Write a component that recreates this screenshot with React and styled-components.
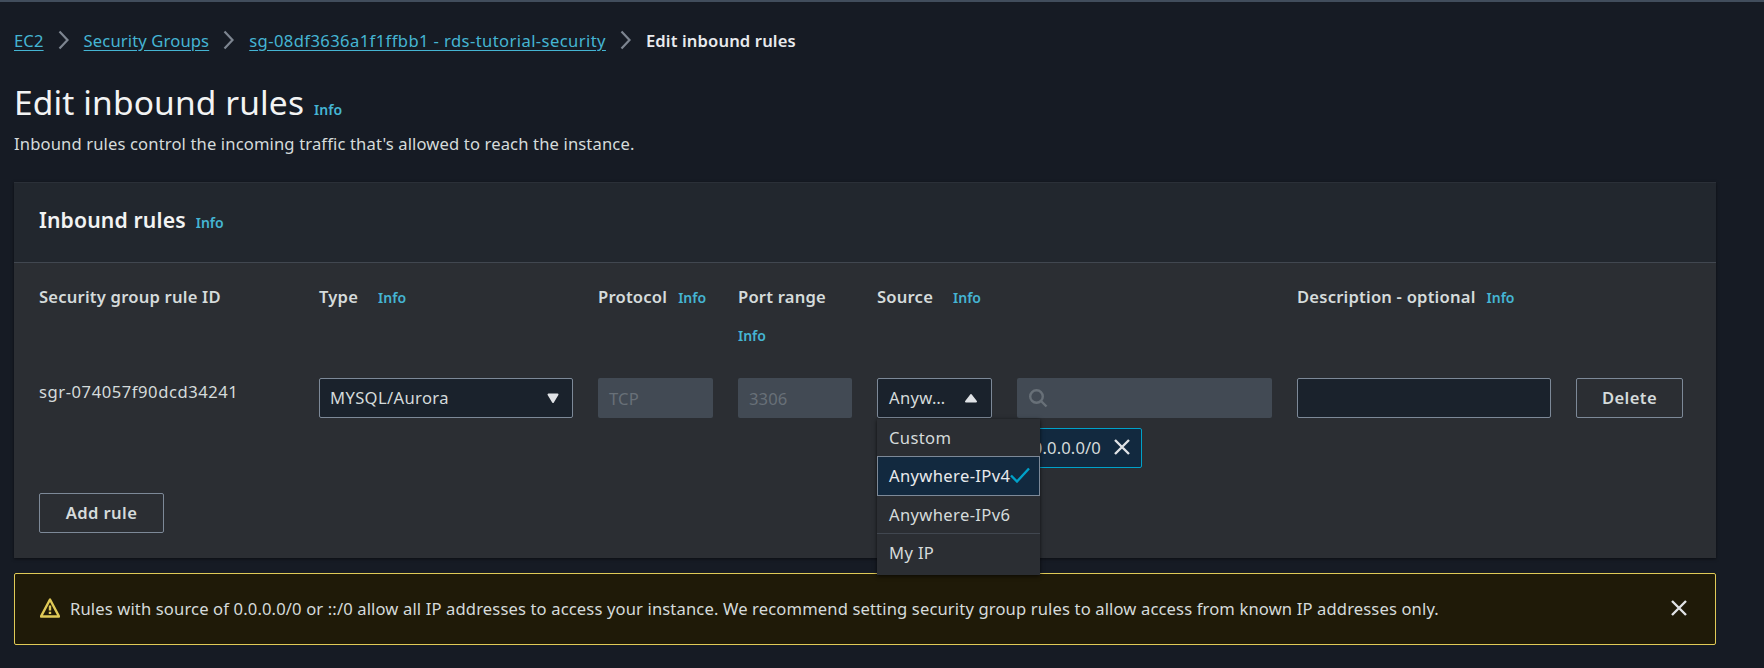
import React from 'react';
import styled, { createGlobalStyle } from 'styled-components';

const GlobalStyle = createGlobalStyle`
    html, body {
        margin: 0;
        padding: 0;
        height: 100%;
        background: #161b24;
    }

    body {
        font-family: "Noto Sans", "Open Sans", sans-serif;
        font-size: 16.6px;
        letter-spacing: .13px;
        color: #d5dbdb;
    }
`;

const Page = styled.div`
    height: 668px;
    box-sizing: border-box;
    border-top: 2px solid #414d5c;
    padding: 0 48px 0 14px;
    overflow: hidden;
`;

const Breadcrumbs = styled.nav`
    display: flex;
    align-items: center;
    height: 24px;
    margin-top: 26px;
    gap: 13px;
`;

const Crumb = styled.a`
    color: #45b5d3;
    text-decoration: underline;
    text-underline-offset: 3px;
    letter-spacing: ${props => props.wide ? '.4px' : 'inherit'};
`;

const CurrentCrumb = styled.span`
    color: #e8eaed;
    font-weight: 600;
`;

const TitleRow = styled.div`
    display: flex;
    align-items: baseline;
    gap: 10px;
    margin-top: 28px;
`;

const Title = styled.h1`
    margin: 0;
    font-size: 33.5px;
    line-height: 44px;
    font-weight: 400;
    color: #f2f3f3;
`;

const InfoLink = styled.a`
    color: #45b5d3;
    font-size: 14px;
    font-weight: 600;
    letter-spacing: 0;
`;

const Subtitle = styled.p`
    margin: 8px 0 0;
    line-height: 24px;
    color: #d5dbdb;
`;

const Panel = styled.section`
    margin-top: 26px;
    background: #2b2e33;
    box-shadow: 0 1px 3px rgba(0, 0, 0, .5);
`;

const PanelHeader = styled.header`
    display: flex;
    align-items: baseline;
    gap: 10px;
    height: 81px;
    box-sizing: border-box;
    padding: 23px 25px 0;
    background: #22272e;
    border-top: 1px solid #2b3038;
    border-bottom: 1px solid #414750;
`;

const PanelTitle = styled.h2`
    margin: 0;
    font-size: 21.2px;
    line-height: 28px;
    font-weight: 600;
    color: #f2f3f3;
`;

const PanelBody = styled.div`
    padding: 22px 25px 25px;
`;

const RuleGrid = styled.div`
    display: grid;
    grid-template-columns: 255px 254px 115px 114px 115px 255px 254px 107px;
    column-gap: 25px;
`;

const HeaderCell = styled.div`
    grid-column: ${props => props.span ? `span ${props.span}` : 'auto'};
    height: 93px;
    line-height: 24px;
`;

const HeaderLabel = styled.span`
    font-weight: 600;
    letter-spacing: .2px;
    color: #d5dbdb;
    margin-right: ${props => props.gap || 11}px;
`;

const WrappedInfo = styled(InfoLink)`
    display: block;
    margin-top: 15px;
`;

const RuleId = styled.div`
    line-height: 24px;
    padding-top: 2px;
    letter-spacing: .55px;
`;

const controlBase = `
    height: 40px;
    box-sizing: border-box;
    border-radius: 2px;
    display: flex;
    align-items: center;
`;

const Select = styled.div`
    ${controlBase}
    justify-content: space-between;
    background: #1a222c;
    border: 1px solid #7d8998;
    padding: 0 ${props => props.open ? '12px' : '11px'} 0 ${props => props.open ? '11px' : '10px'};
    letter-spacing: .35px;
    line-height: 36px;
    color: #d5dbdb;
`;

const DisabledInput = styled.div`
    ${controlBase}
    background: #424a54;
    padding: 0 11px;
    color: #687078;
`;

const TextInput = styled.div`
    ${controlBase}
    background: #1a222c;
    border: 1px solid #7d8998;
`;

const Button = styled.button`
    ${controlBase}
    justify-content: center;
    background: transparent;
    border: 1px solid #7d8998;
    color: #d5dbdb;
    font-family: inherit;
    font-size: inherit;
    letter-spacing: .4px;
    font-weight: 600;
    padding: 0 0 2px;
    width: ${props => props.width ? `${props.width}px` : '100%'};
`;

const SourceCell = styled.div`
    position: relative;
`;

const Menu = styled.ul`
    position: absolute;
    z-index: 2;
    top: 41px;
    left: 0;
    width: 163px;
    margin: 0;
    padding: 0;
    list-style: none;
    letter-spacing: .35px;
    background: #2b2e33;
    box-shadow: 0 1px 4px rgba(0, 0, 0, .7);
`;

const MenuItem = styled.li`
    display: flex;
    align-items: center;
    box-sizing: border-box;
    height: ${props => props.height}px;
    padding-left: ${props => props.selected ? '11px' : '12px'};
    padding-bottom: ${props => props.divided ? '4px' : props.selected ? '2px' : '0'};
    color: ${props => props.selected ? '#e8eaed' : '#d5dbdb'};
    background: ${props => props.selected ? '#12293f' : 'transparent'};
    border: ${props => props.selected ? '1px solid #7d8998' : 'none'};
    border-top: ${props => props.divided ? '1px solid #414750' : ''};
`;

const Chip = styled.div`
    display: inline-flex;
    align-items: center;
    justify-content: flex-end;
    box-sizing: border-box;
    width: 125px;
    height: 40px;
    margin-top: 10px;
    padding: 0 10px 2px 0;
    gap: 12px;
    background: #12293f;
    border: 1px solid #00a1c9;
    border-radius: 2px;
    color: #d5dbdb;
`;

const AddRow = styled.div`
    margin-top: 25px;
`;

const Alert = styled.div`
    display: flex;
    align-items: center;
    box-sizing: border-box;
    height: 72px;
    margin-top: 15px;
    padding: 0 27px 2px 25px;
    background: #1f1a08;
    border: 1px solid #e0ca57;
    border-radius: 2px;
    color: #d5dbdb;
`;

const AlertText = styled.div`
    flex: 1;
    margin-left: 10px;
`;

const Chevron = () => (
    <svg width="14" height="20" viewBox="0 0 14 20" fill="none" stroke="#7d8590" strokeWidth="2.2">
        <path d="M2.5 1.5l8 8.5-8 8.5" />
    </svg>
);

const CaretDown = () => (
    <svg width="16" height="16" viewBox="0 0 16 16" fill="#e0e3e6" stroke="#e0e3e6" strokeWidth="2" strokeLinejoin="round">
        <path d="M3.5 4.5h9L8 12z" />
    </svg>
);

const CaretUp = () => (
    <svg width="16" height="16" viewBox="0 0 16 16" fill="#e0e3e6" stroke="#e0e3e6" strokeWidth="2" strokeLinejoin="round">
        <path d="M3 11.5h10L8 5z" />
    </svg>
);

const SearchIcon = () => (
    <svg width="20" height="20" viewBox="0 0 20 20" fill="none" stroke="#687078" strokeWidth="2.4">
        <circle cx="8.5" cy="8.5" r="6.3" />
        <path d="M13 13l5.5 5.5" />
    </svg>
);

const CloseIcon = () => (
    <svg width="18" height="18" viewBox="0 0 18 18" fill="none" stroke="#e0e3e6" strokeWidth="2.4">
        <path d="M2 2l14 14M16 2L2 16" />
    </svg>
);

const CheckIcon = () => (
    <svg width="20" height="16" viewBox="0 0 20 16" fill="none" stroke="#00a1c9" strokeWidth="2.4">
        <path d="M1 8.5l6 6L19 1.5" />
    </svg>
);

const WarningIcon = () => (
    <svg width="20" height="20" viewBox="0 0 20 20" fill="none" stroke="#e0ca57" strokeWidth="2.4" strokeLinejoin="round">
        <path d="M10 1.5L1 18.5h18z" />
        <path d="M10 7.5v5M10 13.8v2.2" />
    </svg>
);

const App = () => (
    <Page>
        <GlobalStyle />
        <Breadcrumbs>
            <Crumb>EC2</Crumb>
            <Chevron />
            <Crumb>Security Groups</Crumb>
            <Chevron />
            <Crumb wide>sg-08df3636a1f1ffbb1 - rds-tutorial-security</Crumb>
            <Chevron />
            <CurrentCrumb>Edit inbound rules</CurrentCrumb>
        </Breadcrumbs>

        <TitleRow>
            <Title>Edit inbound rules</Title>
            <InfoLink>Info</InfoLink>
        </TitleRow>
        <Subtitle>Inbound rules control the incoming traffic that's allowed to reach the instance.</Subtitle>

        <Panel>
            <PanelHeader>
                <PanelTitle>Inbound rules</PanelTitle>
                <InfoLink>Info</InfoLink>
            </PanelHeader>
            <PanelBody>
                <RuleGrid>
                    <HeaderCell><HeaderLabel>Security group rule ID</HeaderLabel></HeaderCell>
                    <HeaderCell><HeaderLabel gap={20}>Type</HeaderLabel><InfoLink>Info</InfoLink></HeaderCell>
                    <HeaderCell><HeaderLabel>Protocol</HeaderLabel><InfoLink>Info</InfoLink></HeaderCell>
                    <HeaderCell><HeaderLabel>Port range</HeaderLabel><WrappedInfo>Info</WrappedInfo></HeaderCell>
                    <HeaderCell span={2}><HeaderLabel gap={20}>Source</HeaderLabel><InfoLink>Info</InfoLink></HeaderCell>
                    <HeaderCell span={2}><HeaderLabel>Description - optional</HeaderLabel><InfoLink>Info</InfoLink></HeaderCell>

                    <RuleId>sgr-074057f90dcd34241</RuleId>
                    <Select>MYSQL/Aurora<CaretDown /></Select>
                    <DisabledInput>TCP</DisabledInput>
                    <DisabledInput>3306</DisabledInput>
                    <SourceCell>
                        <Select open>Anyw…<CaretUp /></Select>
                        <Menu>
                            <MenuItem height={37}>Custom</MenuItem>
                            <MenuItem height={40} selected>Anywhere-IPv4<CheckIcon /></MenuItem>
                            <MenuItem height={37}>Anywhere-IPv6</MenuItem>
                            <MenuItem height={42} divided>My IP</MenuItem>
                        </Menu>
                    </SourceCell>
                    <div>
                        <DisabledInput><SearchIcon /></DisabledInput>
                        <Chip>0.0.0.0/0<CloseIcon /></Chip>
                    </div>
                    <TextInput />
                    <Button>Delete</Button>
                </RuleGrid>
                <AddRow><Button width={125}>Add rule</Button></AddRow>
            </PanelBody>
        </Panel>

        <Alert>
            <WarningIcon />
            <AlertText>Rules with source of 0.0.0.0/0 or ::/0 allow all IP addresses to access your instance. We recommend setting security group rules to allow access from known IP addresses only.</AlertText>
            <CloseIcon />
        </Alert>
    </Page>
);

export default App;
